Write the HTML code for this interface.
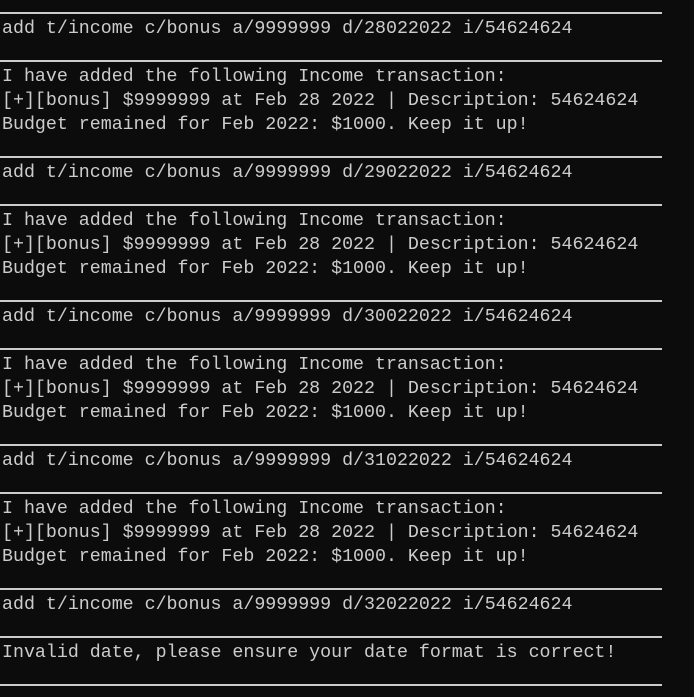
<!DOCTYPE html>
<html><head><style>
body{margin:0;width:694px;height:697px;background:#0c0c0c;overflow:hidden;position:relative;font-family:"Liberation Mono",monospace;font-size:18.3px;color:#cccccc}
.t{position:absolute;left:2px;height:24px;line-height:24px;white-space:pre;margin-top:2px}
.r{position:absolute;left:0;width:662px;height:2px;background:#cccccc}
</style></head><body>
<div class="r" style="top:12px"></div>
<div class="t" style="top:15px">add t/income c/bonus a/9999999 d/28022022 i/54624624</div>
<div class="r" style="top:60px"></div>
<div class="t" style="top:63px">I have added the following Income transaction:</div>
<div class="t" style="top:87px">[+][bonus] $9999999 at Feb 28 2022 | Description: 54624624</div>
<div class="t" style="top:111px">Budget remained for Feb 2022: $1000. Keep it up!</div>
<div class="r" style="top:156px"></div>
<div class="t" style="top:159px">add t/income c/bonus a/9999999 d/29022022 i/54624624</div>
<div class="r" style="top:204px"></div>
<div class="t" style="top:207px">I have added the following Income transaction:</div>
<div class="t" style="top:231px">[+][bonus] $9999999 at Feb 28 2022 | Description: 54624624</div>
<div class="t" style="top:255px">Budget remained for Feb 2022: $1000. Keep it up!</div>
<div class="r" style="top:300px"></div>
<div class="t" style="top:303px">add t/income c/bonus a/9999999 d/30022022 i/54624624</div>
<div class="r" style="top:348px"></div>
<div class="t" style="top:351px">I have added the following Income transaction:</div>
<div class="t" style="top:375px">[+][bonus] $9999999 at Feb 28 2022 | Description: 54624624</div>
<div class="t" style="top:399px">Budget remained for Feb 2022: $1000. Keep it up!</div>
<div class="r" style="top:444px"></div>
<div class="t" style="top:447px">add t/income c/bonus a/9999999 d/31022022 i/54624624</div>
<div class="r" style="top:492px"></div>
<div class="t" style="top:495px">I have added the following Income transaction:</div>
<div class="t" style="top:519px">[+][bonus] $9999999 at Feb 28 2022 | Description: 54624624</div>
<div class="t" style="top:543px">Budget remained for Feb 2022: $1000. Keep it up!</div>
<div class="r" style="top:588px"></div>
<div class="t" style="top:591px">add t/income c/bonus a/9999999 d/32022022 i/54624624</div>
<div class="r" style="top:636px"></div>
<div class="t" style="top:639px">Invalid date, please ensure your date format is correct!</div>
<div class="r" style="top:684px"></div>
</body></html>
